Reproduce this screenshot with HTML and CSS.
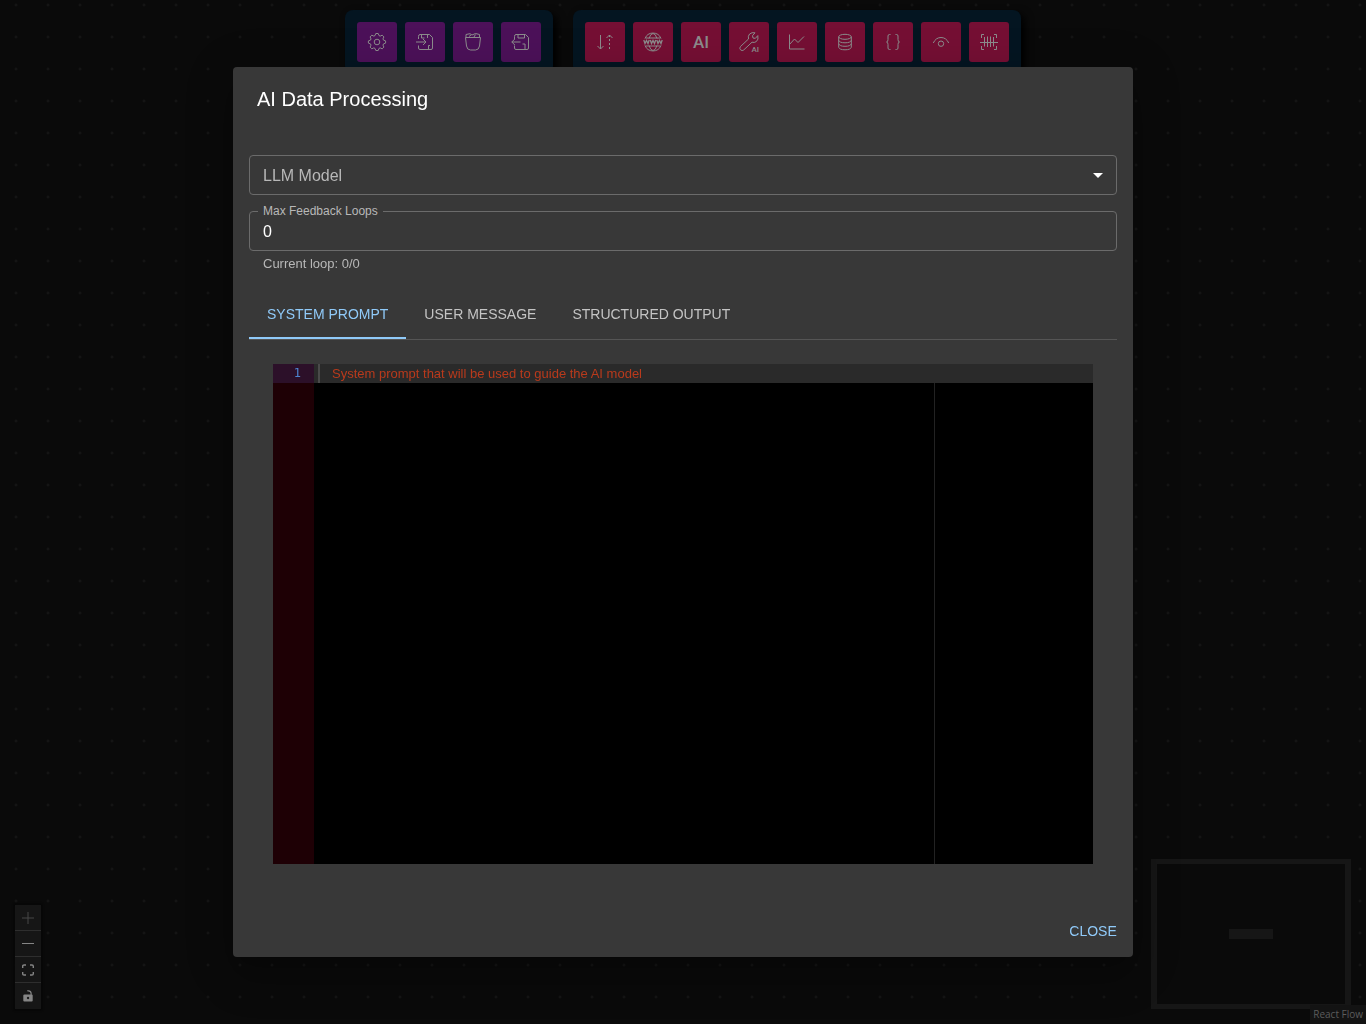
FILE: index.html
```html
<!DOCTYPE html>
<html lang="en">
<head>
<meta charset="utf-8">
<meta name="viewport" content="width=device-width, initial-scale=1">
<title>AI Data Processing</title>
<link rel="stylesheet" href="styles.css">
</head>
<body>
<main class="canvas">
  <header class="toolbars">
    <nav class="toolbar" aria-label="Workflow">
      <button class="tool tool-flow" type="button" aria-label="Settings">
        <svg viewBox="0 0 20 20"><path d="M8 3.600 8.800 1.500h2.400l.8 2.100 1.200.5 2-.9 1.700 1.700-.9 2 .5 1.200 2.100.8v2.200l-2.100.8-.5 1.200.9 2-1.700 1.700-2-.9-1.200.5-.8 2.100H8.800L8 16.400l-1.200-.5-2 .9-1.700-1.700.9-2-.5-1.200-2.100-.8V8.900l2.100-.8.500-1.200-.9-2 1.700-1.700 2 .9z"/><circle cx="10" cy="10" r="2.800"/></svg>
      </button>
      <button class="tool tool-flow" type="button" aria-label="Load">
        <svg viewBox="0 0 20 20"><path d="M3.500 7V4.500Q3.500 2.500 5 2.500h9.500l3 3V16q0 1.500-1.500 1.500H5q-1.500 0-1.500-1.500v-2.500M6.500 2.500v3.500h3M12.500 2.500V6M11 17.500h2.500v-4h1.500M1 10h10M8 7l3 3-3 3"/></svg>
      </button>
      <button class="tool tool-flow" type="button" aria-label="Clear">
        <svg viewBox="0 0 20 20"><path d="M2.500 5.500h15L16.500 14q-.6 4-4 4h-5q-3.400 0-4-4zM3 5.500V2.500l4-.8 2 1.300 3.500-1.500 4 1v3M6 4.500l2-1.500M11 5l1.500-2.500"/></svg>
      </button>
      <button class="tool tool-flow" type="button" aria-label="Save">
        <svg viewBox="0 0 20 20"><path d="M3.500 7V4.500Q3.500 2.500 5 2.500h9.500l3 3V16q0 1.500-1.500 1.500H5q-1.500 0-1.500-1.500v-2.500M7 2.500V6h6.500V2.500M14 17.500v-5.500h-2.500M.8 10h8.700M3.800 7l-3 3 3 3"/></svg>
      </button>
    </nav>
    <nav class="toolbar" aria-label="Nodes">
      <button class="tool tool-node" type="button" aria-label="Input and output">
        <svg viewBox="0 0 20 20"><path d="M5.500 3v14M2.500 14l3 3 3-3M11.500 6l3-3 3 3"/><path stroke-dasharray="2 2" d="M14.500 3v14"/></svg>
      </button>
      <button class="tool tool-node" type="button" aria-label="Web request">
        <svg viewBox="0 0 20 20"><path d="M2 6.500a8.600 8.600 0 0 1 16 0M2 13.500a8.600 8.600 0 0 0 16 0M6 6.500Q7.500 1.500 10 1.500t4 5M6 13.500q1.500 5 4 5t4-5M2.500 6h15M2.500 14h15"/><path class="bold" d="m.8 8 1.200 3.500L3.500 8.500l1.500 3L6.200 8m1.100 0 1.200 3.500 1.500-3 1.500 3L12.700 8m1.100 0 1.200 3.500 1.500-3 1.500 3L19.200 8"/></svg>
      </button>
      <button class="tool tool-node tool-text" type="button">AI</button>
      <button class="tool tool-node tool-tagged" type="button" aria-label="AI tools">
        <svg viewBox="0 0 20 20"><path d="M16 .8 13.500 3.700l.5 2.300 2.300.4 2.500-2.800q1 4-1.500 6-2 1.400-4.300.6L4.700 18q-1.600 1.300-3.200-.2-1.500-1.600 0-3.300L9.500 7Q8.700 4 10.600 2q2.300-2 5.400-1.200z"/></svg><span class="tag">AI</span>
      </button>
      <button class="tool tool-node" type="button" aria-label="Chart">
        <svg viewBox="0 0 20 20"><path d="M2.500 2.500v14.500h15M2.500 12.500 7.500 7l3.500 3.500 6-6"/></svg>
      </button>
      <button class="tool tool-node" type="button" aria-label="Database">
        <svg viewBox="0 0 20 20"><ellipse cx="10" cy="4.800" rx="6.300" ry="2.500"/><path d="M3.700 4.800v10.500q.8 2.500 6.300 2.500t6.300-2.500V4.800M3.700 8.300q.8 2.500 6.300 2.500t6.300-2.500M3.700 11.800q.8 2.500 6.300 2.500t6.300-2.500"/></svg>
      </button>
      <button class="tool tool-node" type="button" aria-label="JSON">
        <svg viewBox="0 0 20 20"><path d="M7.500 2.500H6.500Q5 2.500 5 4v3.500Q5 10 3.500 10 5 10 5 12.500V16q0 1.500 1.500 1.500h1M12.500 2.500h1Q15 2.500 15 4v3.500q0 2.500 1.500 2.500-1.500 0-1.500 2.500V16q0 1.500-1.500 1.500h-1"/></svg>
      </button>
      <button class="tool tool-node" type="button" aria-label="Preview">
        <svg viewBox="0 0 20 20"><path d="M2.300 11q2.500-5.500 7.700-5.500t7.700 5.500"/><circle cx="10" cy="11.700" r="2.700"/></svg>
      </button>
      <button class="tool tool-node" type="button" aria-label="Barcode">
        <svg viewBox="0 0 20 20"><path d="M2.500 6V2.500H5M15 2.500h2.500V6M2.500 14v3.500H5M15 17.500h2.500V14M1 10.500h18"/><path d="M5.500 5v9.500M8.500 4.500v10.500M11.500 4.500v10.500M14.500 5v9.500"/></svg>
      </button>
    </nav>
  </header>

  <footer class="canvas-foot">
    <div class="zoom-controls">
      <button type="button" aria-label="Zoom in" disabled><svg viewBox="0 0 12 12"><path d="M6 0v12M0 6h12"/></svg></button>
      <button type="button" aria-label="Zoom out"><svg viewBox="0 0 12 12"><path d="M0 5.500h12"/></svg></button>
      <button type="button" aria-label="Fit view"><svg viewBox="0 0 12 12"><path class="bold" d="M.7 4V2.200Q.7 1 2 1h2M8 1h2q1.300 0 1.300 1.200V4M11.300 8v1.800Q11.300 11 10 11H8M4 11H2Q.7 11 .7 9.800V8"/></svg></button>
      <button type="button" aria-label="Lock view"><svg viewBox="0 0 12 12"><path class="solid" fill-rule="evenodd" d="M2.500 4.500h6V3.300Q8.300 1.600 6.500 1.500L5.200 1.300V.3Q9.500-.3 9.700 3.200v1.300q1 0 1 1v5q0 1-1 1h-7.400q-1 0-1-1v-5q0-1 1.200-1zM6 6.800a1.200 1.200 0 1 0 .1 0z"/></svg></button>
    </div>
    <div class="minimap"><div class="minimap-node"></div></div>
    <a class="attribution" href="#">React Flow</a>
  </footer>
</main>

<div class="backdrop">
  <section class="dialog" role="dialog" aria-modal="true" aria-labelledby="dialog-title">
    <h2 class="dialog-title" id="dialog-title">AI Data Processing</h2>
    <div class="dialog-content">
      <div class="field">
        <label class="field-label" for="llm">LLM Model</label>
        <select class="field-input" id="llm"><option value=""></option></select>
        <svg class="field-arrow" viewBox="0 0 10 5"><path d="M0 0h10L5 5z"/></svg>
      </div>
      <div class="field">
        <label class="field-label field-label-small" for="loops">Max Feedback Loops</label>
        <input class="field-input" id="loops" type="text" inputmode="numeric" value="0" aria-describedby="loops-help">
      </div>
      <p class="helper" id="loops-help">Current loop: 0/0</p>
      <div class="tabs" role="tablist">
        <button class="tab tab-active" type="button" role="tab" aria-selected="true">SYSTEM PROMPT</button>
        <button class="tab" type="button" role="tab" aria-selected="false">USER MESSAGE</button>
        <button class="tab" type="button" role="tab" aria-selected="false">STRUCTURED OUTPUT</button>
      </div>
      <div class="editor">
        <div class="gutter"><div class="gutter-line">1</div></div>
        <textarea class="code" aria-label="System prompt" spellcheck="false" placeholder="System prompt that will be used to guide the AI model"></textarea>
      </div>
    </div>
    <div class="dialog-actions"><button class="close" type="button">CLOSE</button></div>
  </section>
</div>
</body>
</html>
```
FILE: styles.css
```css
* { box-sizing: border-box; }

body {
  margin: 0;
  background: #0a0a0a;
  color: #fff;
  font-family: "Liberation Sans", Arial, sans-serif;
  font-size: 16px;
}

button, input, select, textarea { font: inherit; color: inherit; }

button {
  border: 0;
  padding: 0;
  background: none;
  cursor: pointer;
}

/* Flow canvas */
.canvas {
  display: flex;
  flex-direction: column;
  justify-content: space-between;
  min-height: 100vh;
  background: radial-gradient(circle, #1a1a1a 0, #0a0a0a 2px) 0 -11px / 32px 32px;
}

.toolbars {
  display: flex;
  justify-content: center;
  gap: 20px;
  padding-top: 10px;
}

.toolbar {
  display: flex;
  gap: 8px;
  padding: 12px;
  border-radius: 8px;
  background: #041521;
  box-shadow: 4px 4px 8px #000;
}

.tool {
  display: flex;
  align-items: center;
  justify-content: center;
  width: 40px;
  height: 40px;
  border-radius: 3px;
  color: #8c8c8c;
}

.tool-flow { background: #4c1159; }
.tool-node { background: #750f34; }

.tool svg {
  width: 20px;
  height: 20px;
  fill: none;
  stroke: currentColor;
  stroke-width: 1;
}

.tool svg .bold { stroke-width: 1.3; }

.tool-text {
  font-family: Roboto, sans-serif;
  font-size: 17px;
  font-weight: 500;
}

.tool-tagged { position: relative; }

.tag {
  position: absolute;
  right: 10px;
  bottom: 8px;
  font-family: Roboto, sans-serif;
  font-size: 8px;
  font-weight: 500;
  line-height: 8px;
}

.canvas-foot {
  position: relative;
  display: flex;
  align-items: flex-end;
  justify-content: space-between;
  padding: 15px;
}

.zoom-controls {
  display: flex;
  flex-direction: column;
  box-shadow: 0 0 2px 1px #060606;
}

.zoom-controls button {
  display: flex;
  align-items: center;
  justify-content: center;
  width: 26px;
  height: 26px;
  border-bottom: 1px solid #2e2e2e;
  background: #161616;
  color: #858585;
}

.zoom-controls button:last-child { border-bottom: 0; }
.zoom-controls button:disabled { color: #464646; }

.zoom-controls svg {
  width: 12px;
  height: 12px;
  fill: none;
  stroke: currentColor;
  stroke-width: 1;
  overflow: visible;
}

.zoom-controls .bold { stroke-width: 1.4; }
.zoom-controls .solid { fill: currentColor; stroke: none; }

.minimap {
  display: flex;
  align-items: center;
  justify-content: center;
  width: 200px;
  height: 150px;
  border: solid #161616;
  border-width: 5px 6px;
  background: #0a0a0a;
}

.minimap-node {
  width: 44px;
  height: 10px;
  background: #161616;
}

.attribution {
  position: absolute;
  right: 0;
  bottom: 0;
  padding: 2px 3px;
  background: #131313;
  color: #5c5c5c;
  font-family: "Open Sans", sans-serif;
  font-size: 10px;
  line-height: 15px;
  text-decoration: none;
}

/* Dialog */
.backdrop {
  position: fixed;
  inset: 0;
  display: flex;
  align-items: center;
  justify-content: center;
  padding: 32px;
}

.dialog {
  display: flex;
  flex-direction: column;
  width: 100%;
  max-width: 900px;
  max-height: 100%;
  border-radius: 4px;
  background: #383838;
  box-shadow: 0 11px 15px -7px rgba(0, 0, 0, .2), 0 24px 38px 3px rgba(0, 0, 0, .14), 0 9px 46px 8px rgba(0, 0, 0, .12);
}

.dialog-title {
  margin: 0;
  padding: 16px 24px;
  font-size: 20px;
  font-weight: 400;
  line-height: 32px;
}

.dialog-content {
  padding: 24px 16px 17px;
  overflow: auto;
}

.field {
  position: relative;
  margin-bottom: 16px;
}

.field-input {
  display: block;
  width: 100%;
  height: 40px;
  padding: 9px 13px 7px;
  border: 1px solid #6b6b6b;
  border-radius: 4px;
  background: transparent;
  appearance: none;
  outline: 0;
}

.field-label {
  position: absolute;
  top: 9px;
  left: 14px;
  color: #b8b8b8;
  line-height: 24px;
  pointer-events: none;
}

.field-label-small {
  top: -8px;
  left: 9px;
  padding: 0 5px;
  background: #383838;
  font-size: 12px;
  line-height: 16px;
}

.field-arrow {
  position: absolute;
  top: 18px;
  right: 14px;
  width: 10px;
  height: 5px;
  fill: #fff;
  pointer-events: none;
}

.helper {
  margin: -13px 14px 17px;
  color: #b8b8b8;
  font-size: 13px;
  line-height: 20px;
}

.tabs {
  display: flex;
  border-bottom: 1px solid #555;
}

.tab {
  height: 48px;
  padding: 0 18px;
  border-bottom: 2px solid transparent;
  color: #c4c4c4;
  font-size: 14px;
}

.tab-active {
  border-bottom-color: #90caf9;
  color: #90caf9;
}

.editor {
  display: flex;
  height: 500px;
  margin: 24px;
}

.gutter {
  flex: none;
  width: 41px;
  background: #1e0005;
}

.gutter-line {
  padding-right: 13px;
  background: #2c1029;
  color: #4d84d0;
  font-family: "DejaVu Sans Mono", monospace;
  font-size: 12px;
  line-height: 19px;
  text-align: right;
}

.code {
  flex: 1;
  min-width: 0;
  padding: 0 18px;
  border: 0;
  outline: 0;
  resize: none;
  background:
    linear-gradient(#4a4a4a, #4a4a4a) 4px 0 / 2px 19px no-repeat,
    linear-gradient(#2a2a2a, #2a2a2a) 0 0 / 100% 19px no-repeat,
    linear-gradient(#222, #222) 620px 0 / 1px 100% no-repeat,
    #000;
  font-size: 13px;
  line-height: 19px;
}

.code::placeholder { color: #b93a1c; opacity: 1; }

.dialog-actions {
  display: flex;
  justify-content: flex-end;
  padding: 8px;
}

.close {
  width: 64px;
  height: 36px;
  color: #90caf9;
  font-size: 14px;
}
```
